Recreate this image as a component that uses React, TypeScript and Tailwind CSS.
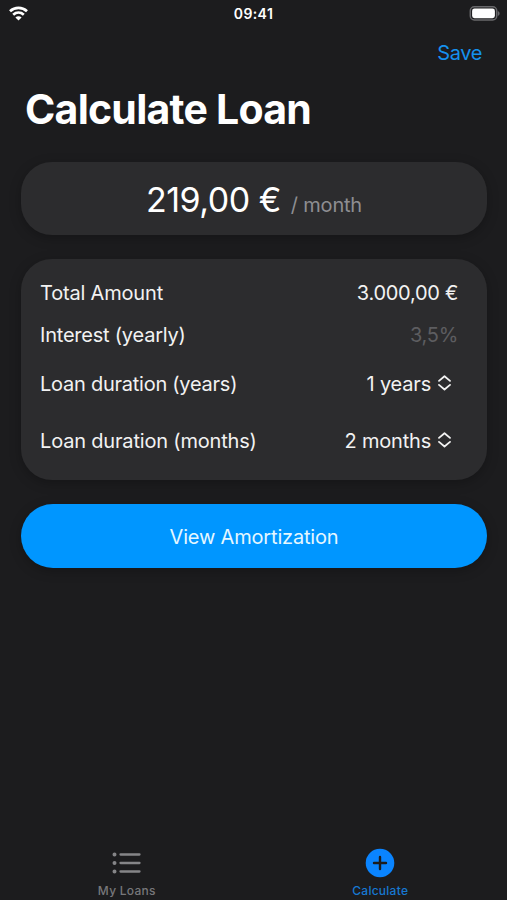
import React from "react";

const Selector = ({ value }: { value: string }) => (
  <button className="flex items-center gap-[7px] mr-[7px]">
    <span className="tracking-[-0.2px]">{value}</span>
    <svg className="-mt-[2px]" width="13" height="16" viewBox="0 0 13 16" fill="none" stroke="#f2f2f2" strokeWidth="1.8" strokeLinecap="round" strokeLinejoin="round">
      <path d="M1 5.9L6.5 1.3L12 5.9" />
      <path d="M1 9.9L6.5 14.5L12 9.9" />
    </svg>
  </button>
);

const App = () => {
  return (
    <div className="w-full h-[900px] flex flex-col overflow-hidden bg-[#1c1c1e] text-[#f2f2f2] text-[20px] tracking-[-0.18px] font-['Inter',sans-serif]">
      {/* Status Bar */}
      <div className="h-7 shrink-0 grid grid-cols-3 items-center pl-[9px] pr-[7px]">
        <svg className="-mt-[2px]" width="19" height="15" viewBox="0 0 19 15" fill="none" stroke="white" strokeWidth="2.7">
          <path d="M1 5.3C5.8 .8 13.2 .8 18 5.3" />
          <path d="M4.2 8.8C7.3 6 11.7 6 14.8 8.8" />
          <path d="M6.4 11.4C8.3 9.9 10.7 9.9 12.6 11.4L9.5 14.6Z" fill="white" stroke="none" />
        </svg>
        <span className="-ml-[2px] text-center text-[14px] leading-7 font-semibold text-white tracking-[0.4px]">09:41</span>
        <svg className="justify-self-end -mt-[2px]" width="31" height="15" viewBox="0 0 31 15">
          <rect x="1.3" y=".8" width="26.4" height="13.2" rx="4" fill="none" stroke="#68686b" strokeWidth="1.5" />
          <rect x="3.1" y="2.6" width="22.8" height="9.6" rx="2.4" fill="white" />
          <path d="M28.8 5V10C31.2 9 31.2 6 28.8 5Z" fill="#68686b" />
        </svg>
      </div>

      {/* Header */}
      <div className="h-[50px] shrink-0 flex items-center justify-end pr-[25px]">
        <button className="text-[#1591ee] tracking-[-0.4px]">Save</button>
      </div>
      <h1 className="h-[60px] shrink-0 pl-[25px] text-[41px] leading-[63px] font-bold text-white tracking-[-0.75px]">
        Calculate Loan
      </h1>

      <main className="flex flex-col gap-6 mt-6 pl-[21px] pr-5">
        {/* Monthly Rate */}
        <section className="h-[73px] flex items-baseline justify-center rounded-[31px] bg-[#2c2c2e] shadow-[0_3px_12px_rgba(0,0,0,0.25)]">
          <span className="text-[34px] leading-[75px] text-white tracking-[-0.5px]">219,00 €</span>
          <span className="ml-[10px] text-[#8e8e92] tracking-[-0.2px]">/ month</span>
        </section>

        {/* Loan Details */}
        <section className="h-[221px] pt-[11px] pl-[19px] pr-[29px] rounded-[31px] bg-[#2c2c2e] shadow-[0_3px_12px_rgba(0,0,0,0.25)]">
          <div className="h-[46px] flex items-center justify-between">
            <span>Total Amount</span>
            <span className="tracking-[-0.28px]">3.000,00 €</span>
          </div>
          <div className="h-[38px] flex items-center justify-between">
            <span className="tracking-[-0.22px]">Interest (yearly)</span>
            <span className="text-[#5d5d60] tracking-[-0.3px]">3,5%</span>
          </div>
          <div className="h-[60px] flex items-center justify-between">
            <span className="tracking-[-0.25px]">Loan duration (years)</span>
            <Selector value="1 years" />
          </div>
          <div className="h-[54px] flex items-center justify-between">
            <span>Loan duration (months)</span>
            <Selector value="2 months" />
          </div>
        </section>

        <button className="h-16 pt-[2px] rounded-full bg-[#0096ff] text-[#e5f7ff] shadow-[0_3px_12px_rgba(0,0,0,0.25)]">
          View Amortization
        </button>
      </main>

      {/* Tab Bar */}
      <nav className="mt-auto h-[52px] grid grid-cols-2 text-[12px] leading-[14px] font-medium tracking-[0.25px]">
        <button className="flex flex-col items-center text-[#77777a]">
          <svg width="29" height="30" viewBox="0 0 29 30" fill="none" stroke="#858588" strokeWidth="2.3" strokeLinecap="round">
            <path d="M8.5 6.5H27.5M8.5 15H27.5M8.5 23.5H27.5" />
            <path d="M2.5 6.5H2.51M2.5 15H2.51M2.5 23.5H2.51" strokeWidth="4" />
          </svg>
          <span className="mt-[6px]">My Loans</span>
        </button>
        <button className="flex flex-col items-center text-[#1778d2]">
          <svg width="30" height="30" viewBox="0 0 30 30">
            <circle cx="15" cy="15" r="14.3" fill="#0a84ff" />
            <path d="M15 9V21M9 15H21" stroke="#1c1c1e" strokeWidth="2.4" strokeLinecap="round" />
          </svg>
          <span className="mt-[6px]">Calculate</span>
        </button>
      </nav>
    </div>
  );
};

export default App;
